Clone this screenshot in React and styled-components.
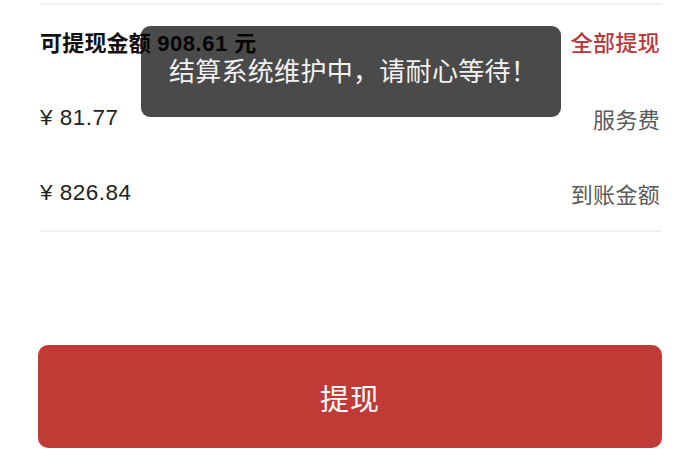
import React from "react";
import styled, { createGlobalStyle } from "styled-components";

const Global = createGlobalStyle`
  html, body { margin: 0; padding: 0; background: #ffffff; }
  body { font-family: "Liberation Sans", "Noto Sans CJK SC", sans-serif; }
`;

const Page = styled.div`
  position: relative;
  width: 700px;
  height: 470px;
  box-sizing: border-box;
  padding: 3px 38px 0 40px;
  overflow: hidden;
`;

const Divider = styled.div`
  height: 2px;
  background: #f1f1f1;
`;

const Row = styled.div`
  display: flex;
  align-items: center;
  justify-content: space-between;
  box-sizing: border-box;
  height: ${(p) => p.$h}px;
  padding: 0 2px ${(p) => p.$lift || 0}px 0;
`;

const Title = styled.span`
  font-size: 22px;
  font-weight: 700;
  color: #111111;
  letter-spacing: 0.2px;
`;

const TitleValue = styled.span`
  letter-spacing: 0.5px;
`;

const Amount = styled.span`
  font-size: 22.5px;
  color: #222222;
  letter-spacing: 0.5px;
`;

const Label = styled.span`
  font-size: 22px;
  color: ${(p) => (p.$accent ? "#b8383c" : "#5a5a5a")};
  font-weight: ${(p) => (p.$accent ? 500 : 400)};
  letter-spacing: 0.3px;
`;

const Submit = styled.button`
  display: flex;
  align-items: center;
  justify-content: center;
  width: 624px;
  height: 103px;
  margin: 113px 0 0 -2px;
  border: none;
  border-radius: 10px;
  background: #c03a36;
  color: #ffffff;
  font-family: "Noto Sans CJK SC", sans-serif;
  font-size: 29px;
  letter-spacing: 1px;
`;

const Toast = styled.div`
  position: absolute;
  left: 141px;
  top: 26px;
  width: 420px;
  height: 91px;
  box-sizing: border-box;
  padding: 0 0 4px 4px;
  border-radius: 9px;
  background: rgba(0, 0, 0, 0.71);
  color: #f2f2f2;
  display: flex;
  align-items: center;
  justify-content: center;
  font-family: "Noto Sans CJK SC", sans-serif;
  font-size: 26px;
  letter-spacing: 0.3px;
`;

export default function App() {
  return (
    <>
      <Global />
      <Page>
        <Divider />
        <Row $h={76} $lift={4}>
          <Title>
            可提现金额 <TitleValue>908.61 元</TitleValue>
          </Title>
          <Label $accent>全部提现</Label>
        </Row>
        <Row $h={74}>
          <Amount>¥ 81.77</Amount>
          <Label>服务费</Label>
        </Row>
        <Row $h={75}>
          <Amount>¥ 826.84</Amount>
          <Label>到账金额</Label>
        </Row>
        <Divider />
        <Submit>提现</Submit>
        <Toast>结算系统维护中，请耐心等待！</Toast>
      </Page>
    </>
  );
}
